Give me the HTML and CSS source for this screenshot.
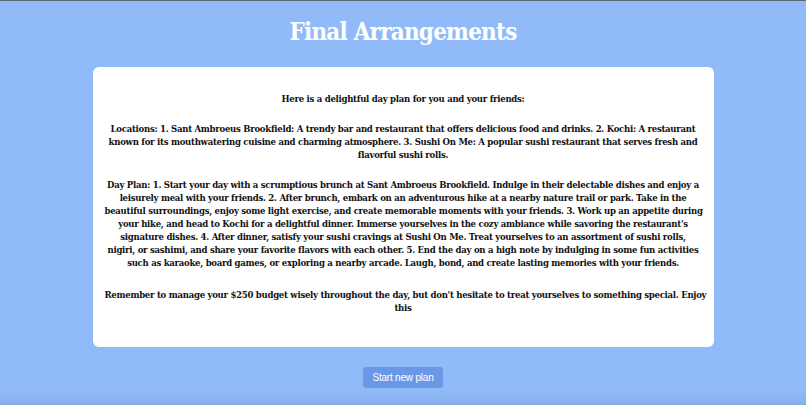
FILE: index.html
```
<!DOCTYPE html>
<html>
<head>
<meta charset="utf-8">
<link rel="stylesheet" href="styles.css">
</head>
<body>
<div class="page">
  <h1 class="title">Final Arrangements</h1>
  <div class="card">
    <p>Here is a delightful day plan for you and your friends:</p>
    <p>Locations: 1. Sant Ambroeus Brookfield: A trendy bar and restaurant that offers delicious food and drinks. 2. Kochi: A restaurant<br>known for its mouthwatering cuisine and charming atmosphere. 3. Sushi On Me: A popular sushi restaurant that serves fresh and<br>flavorful sushi rolls.</p>
    <p>Day Plan: 1. Start your day with a scrumptious brunch at Sant Ambroeus Brookfield. Indulge in their delectable dishes and enjoy a<br>leisurely meal with your friends. 2. After brunch, embark on an adventurous hike at a nearby nature trail or park. Take in the<br>beautiful surroundings, enjoy some light exercise, and create memorable moments with your friends. 3. Work up an appetite during<br>your hike, and head to Kochi for a delightful dinner. Immerse yourselves in the cozy ambiance while savoring the restaurant's<br>signature dishes. 4. After dinner, satisfy your sushi cravings at Sushi On Me. Treat yourselves to an assortment of sushi rolls,<br>nigiri, or sashimi, and share your favorite flavors with each other. 5. End the day on a high note by indulging in some fun activities<br>such as karaoke, board games, or exploring a nearby arcade. Laugh, bond, and create lasting memories with your friends.</p>
    <p class="last">Remember to manage your $250 budget wisely throughout the day, but don't hesitate to treat yourselves to something special. Enjoy<br>this</p>
  </div>
  <div class="actions">
    <button class="btn">Start new plan</button>
  </div>
</div>
</body>
</html>
```
FILE: styles.css
```
html, body {
  margin: 0;
  padding: 0;
  height: 100%;
}
body {
  background: #91bbf8;
  border-top: 1px solid #5d6675;
  box-sizing: border-box;
  overflow: hidden;
}
.page {
  display: flex;
  flex-direction: column;
  align-items: center;
  min-height: 404px;
  background: linear-gradient(to bottom, #91bbf8 0, #91bbf8 388px, #86aeea 404px);
}
.title {
  margin: 16px 0 0;
  font-family: "DejaVu Serif Condensed", "DejaVu Serif", serif;
  font-weight: bold;
  font-size: 24px;
  line-height: 30px;
  color: #ffffff;
  letter-spacing: -0.8px;
}
.card {
  margin-top: 20px;
  width: 621px;
  box-sizing: border-box;
  background: #ffffff;
  border-radius: 6px;
  padding: 8px 12px 16px;
  text-align: center;
  font-family: "DejaVu Serif Condensed", "DejaVu Serif", serif;
  font-weight: bold;
  font-size: 9.5px;
  letter-spacing: -0.28px;
  line-height: 13px;
  color: #111111;
  white-space: nowrap;
}
.card p {
  margin: 17px 0;
}
.card p.last {
  margin-top: 19px;
}
.actions {
  margin-top: 20px;
}
.btn {
  width: 80px;
  height: 21px;
  border: none;
  border-radius: 3px;
  background: #6a97e6;
  color: #ffffff;
  font-family: "Liberation Sans", Arial, sans-serif;
  font-size: 10px;
  letter-spacing: -0.2px;
  padding: 0;
}
```
